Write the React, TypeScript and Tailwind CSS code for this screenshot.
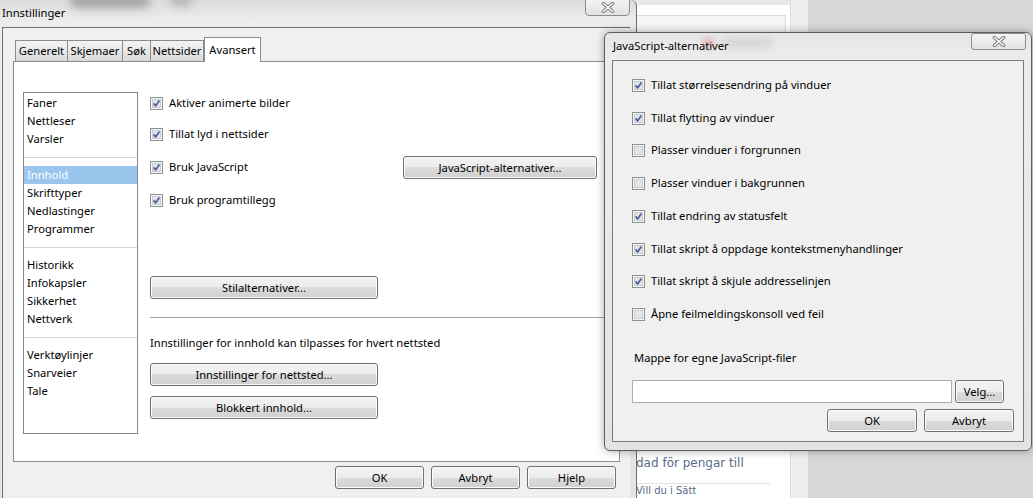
import React from 'react';

const font = "font-['Noto_Sans','Open_Sans',sans-serif]";

const Check: React.FC<{ checked?: boolean }> = ({ checked }) => (
  <svg width="13" height="13" viewBox="0 0 13 13" className="shrink-0">
    <rect x="0.5" y="0.5" width="12" height="12" fill="#f6f6f6" stroke="#8e8f8f" />
    <rect x="2.5" y="2.5" width="8" height="8" fill="#e3e5ea" stroke="#c9ccd2" />
    {checked && (
      <path d="M3.6 6.4 L5.6 8.9 L9.4 3.4" fill="none" stroke="#4b5d9a" strokeWidth="1.7" strokeLinejoin="round" />
    )}
  </svg>
);

const Button: React.FC<{ label: string; className?: string }> = ({ label, className }) => (
  <button
    className={`h-[23px] rounded-[3px] border border-[#707070] bg-[linear-gradient(#f3f3f3,#ececec_50%,#dcdcdc_50%,#d0d0d0)] shadow-[inset_0_0_0_1px_#fbfbfb] text-[11.2px] leading-none text-black ${className ?? ''}`}
  >
    {label}
  </button>
);

const CloseGlyph: React.FC = () => (
  <svg width="14" height="11" viewBox="0 0 14 11">
    <path d="M2.5 1.5 L11.5 9.5 M11.5 1.5 L2.5 9.5" stroke="#7a7a7a" strokeWidth="3.6" strokeLinecap="round" />
    <path d="M2.5 1.5 L11.5 9.5 M11.5 1.5 L2.5 9.5" stroke="#ffffff" strokeWidth="1.6" strokeLinecap="round" />
  </svg>
);

const tabs: [string, string][] = [
  ['Generelt', 'w-[53px]'],
  ['Skjemaer', 'w-[56px]'],
  ['Søk', 'w-[29px]'],
  ['Nettsider', 'w-[54px]'],
];

const groups = [
  ['Faner', 'Nettleser', 'Varsler'],
  ['Innhold', 'Skrifttyper', 'Nedlastinger', 'Programmer'],
  ['Historikk', 'Infokapsler', 'Sikkerhet', 'Nettverk'],
  ['Verktøylinjer', 'Snarveier', 'Tale'],
];

const jsOptions: [string, boolean][] = [
  ['Tillat størrelsesendring på vinduer', true],
  ['Tillat flytting av vinduer', true],
  ['Plasser vinduer i forgrunnen', false],
  ['Plasser vinduer i bakgrunnen', false],
  ['Tillat endring av statusfelt', true],
  ['Tillat skript å oppdage kontekstmenyhandlinger', true],
  ['Tillat skript å skjule addresselinjen', true],
  ['Åpne feilmeldingskonsoll ved feil', false],
];

const SettingsWindow: React.FC = () => (
  <div className="absolute left-0 top-0 flex h-[498px] w-[637px] flex-col rounded-tr-[6px] border-r border-[#6d6d6d] bg-[linear-gradient(180deg,#dcdcdc,#ececec_20px,#e4e4e4)]">
    {/* title bar, with the blurred page behind the glass */}
    <div className="relative h-[27px] shrink-0">
      <div className="absolute left-[70px] top-[-6px] h-[14px] w-[80px] rounded-full bg-[#4a4a4a] opacity-40 blur-[5px]" />
      <div className="absolute left-[170px] top-[-4px] h-[10px] w-[22px] rounded-full bg-[#4a4a4a] opacity-30 blur-[4px]" />
      <div className="absolute left-[2px] top-[5px] text-[11.2px] text-black">Innstillinger</div>
      <div className="absolute left-[585px] top-[-2px] flex h-[18px] w-[45px] items-center justify-center rounded-b-[4px] border border-[#8d8d8d] bg-[linear-gradient(#f4f4f4,#e2e2e2)]">
        <CloseGlyph />
      </div>
    </div>
    {/* client */}
    <div className="ml-[2px] mr-[6px] flex flex-1 flex-col border-l border-t border-[#6e6e6e] bg-[#f0f0f0] pl-[10px] pt-[9px]">
      <div className="flex h-[24px] items-end pl-[2px]">
        {tabs.map(([t, w]) => (
          <div
            key={t}
            className={`-mr-px flex h-[21px] items-center justify-center border border-b-0 border-[#898c95] bg-[linear-gradient(#f3f3f3,#e8e8e8_50%,#d9d9d9)] text-[11.2px] text-black ${w}`}
          >
            {t}
          </div>
        ))}
        <div className="relative z-10 -mb-px ml-px flex h-[25px] w-[57px] items-center justify-center border border-b-0 border-[#898c95] bg-white text-[11.2px] text-black">
          Avansert
        </div>
      </div>
      <div className="flex h-[401px] w-[607px] border border-[#898c95] bg-white pl-[9px] pt-[30px]">
        {/* category list */}
        <div className="h-[342px] w-[115px] shrink-0 border border-[#828790] bg-white pt-[1px]">
          {groups.map((g, gi) => (
            <div key={gi}>
              {gi > 0 && (
                <div className="flex h-[18px] items-center">
                  <div className="h-px w-full bg-[#d8d8d8]" />
                </div>
              )}
              {g.map((item) => (
                <div
                  key={item}
                  className={`flex h-[18px] items-center pl-[3px] text-[11.2px] ${item === 'Innhold' ? 'bg-[#9ac6ee] text-white' : 'text-black'}`}
                >
                  {item}
                </div>
              ))}
            </div>
          ))}
        </div>
        {/* content column */}
        <div className="ml-[12px] flex w-[460px] flex-col text-[11.2px] text-black">
          <div className="mt-[-1px] flex h-[24px] items-center gap-[6px]">
            <Check checked />
            <span>Aktiver animerte bilder</span>
          </div>
          <div className="mt-[7px] flex h-[24px] items-center gap-[6px]">
            <Check checked />
            <span>Tillat lyd i nettsider</span>
          </div>
          <div className="mt-[10px] flex h-[23px] items-center gap-[6px] pr-[13px]">
            <Check checked />
            <span>Bruk JavaScript</span>
            <Button label="JavaScript-alternativer..." className="ml-auto w-[194px]" />
          </div>
          <div className="mt-[9px] flex h-[24px] items-center gap-[6px]">
            <Check checked />
            <span>Bruk programtillegg</span>
          </div>
          <Button label="Stilalternativer..." className="mt-[64px] w-[228px]" />
          <div className="mt-[18px] h-px w-full bg-[#a0a0a0]" />
          <div className="mt-[17px] flex h-[16px] items-center">Innstillinger for innhold kan tilpasses for hvert nettsted</div>
          <Button label="Innstillinger for nettsted..." className="mt-[12px] w-[228px]" />
          <Button label="Blokkert innhold..." className="mt-[10px] w-[228px]" />
        </div>
      </div>
      <div className="flex w-[607px] justify-end gap-[7px] pr-[4px] pt-[4px]">
        <Button label="OK" className="w-[89px]" />
        <Button label="Avbryt" className="w-[89px]" />
        <Button label="Hjelp" className="w-[89px]" />
      </div>
    </div>
  </div>
);

const JsDialog: React.FC = () => (
  <div className="absolute left-[604px] top-[32px] flex h-[419px] w-[428px] flex-col rounded-[6px] border border-[#5e5e5e] bg-[linear-gradient(180deg,#e6e6e6,#ededed_28px,#e3e3e3)] px-[7px] pb-[8px] shadow-[0_0_8px_rgba(0,0,0,0.35)]">
    <div className="relative flex h-[27px] shrink-0 items-center">
      <div className="absolute left-[90px] top-[4px] h-[12px] w-[12px] rounded-full bg-[#d88] opacity-50 blur-[3px]" />
      <div className="absolute left-[110px] top-[6px] h-[8px] w-[50px] rounded-full bg-[#999] opacity-30 blur-[4px]" />
      <span className="relative pl-[1px] text-[11.2px] text-black">JavaScript-alternativer</span>
      <div className="absolute left-[359px] top-0 flex h-[17px] w-[55px] items-center justify-center rounded-[3px] border border-[#8d8d8d] bg-[linear-gradient(#f5f5f5,#e2e2e2)]">
        <CloseGlyph />
      </div>
    </div>
    <div className="flex flex-1 flex-col border border-[#7b7b7b] bg-[#f0f0f0] pl-[19px] pt-[8px] text-[11.2px] text-black">
      {jsOptions.map(([label, checked]) => (
        <div key={label} className="flex h-[32.75px] items-center gap-[6px]">
          <Check checked={checked} />
          <span>{label}</span>
        </div>
      ))}
      <div className="mt-[19px] flex h-[16px] items-center pl-[2px]">Mappe for egne JavaScript-filer</div>
      <div className="mt-[14px] flex items-center gap-[3px]">
        <div className="h-[23px] w-[320px] border border-[#abadb3] bg-white" />
        <Button label="Velg..." className="w-[49px]" />
      </div>
      <div className="mt-[6px] flex justify-end gap-[7px] pr-[9px]">
        <Button label="OK" className="w-[90px]" />
        <Button label="Avbryt" className="w-[90px]" />
      </div>
    </div>
  </div>
);

const BackgroundPage: React.FC = () => (
  <div className="absolute left-[630px] top-0 flex h-full w-[178px]">
    <div className="flex w-[160px] flex-col bg-white">
      <div className="h-[5px] bg-[#e9e9e9]" />
      <div className="h-[10px] bg-white" />
      <div className="mx-[4px] h-[20px] border border-[#dcdcdc] bg-[#f5f5f5]" />
      <div className="flex-1" />
      <div className="flex h-[42px] flex-col pl-[6px]">
        <span className="h-[15px] font-['Verdana','DejaVu_Sans',sans-serif] text-[12px] leading-[15px] text-[#5a6b8a]">dad för pengar till</span>
        <div className="mr-[20px] mt-[12px] h-px shrink-0 bg-[#e2e2e2]" />
        <span className="mt-[1px] font-['Verdana','DejaVu_Sans',sans-serif] text-[10px] leading-[12px] text-[#5a6b8a]">Vill du i Sätt</span>
      </div>
    </div>
    <div className="w-[18px] border-l border-[#dedede] bg-[#efefef]" />
  </div>
);

const App: React.FC = () => (
  <div className={`relative h-[498px] w-[1033px] overflow-hidden bg-[#d7d7d7] ${font}`}>
    <BackgroundPage />
    <SettingsWindow />
    <JsDialog />
  </div>
);

export default App;
